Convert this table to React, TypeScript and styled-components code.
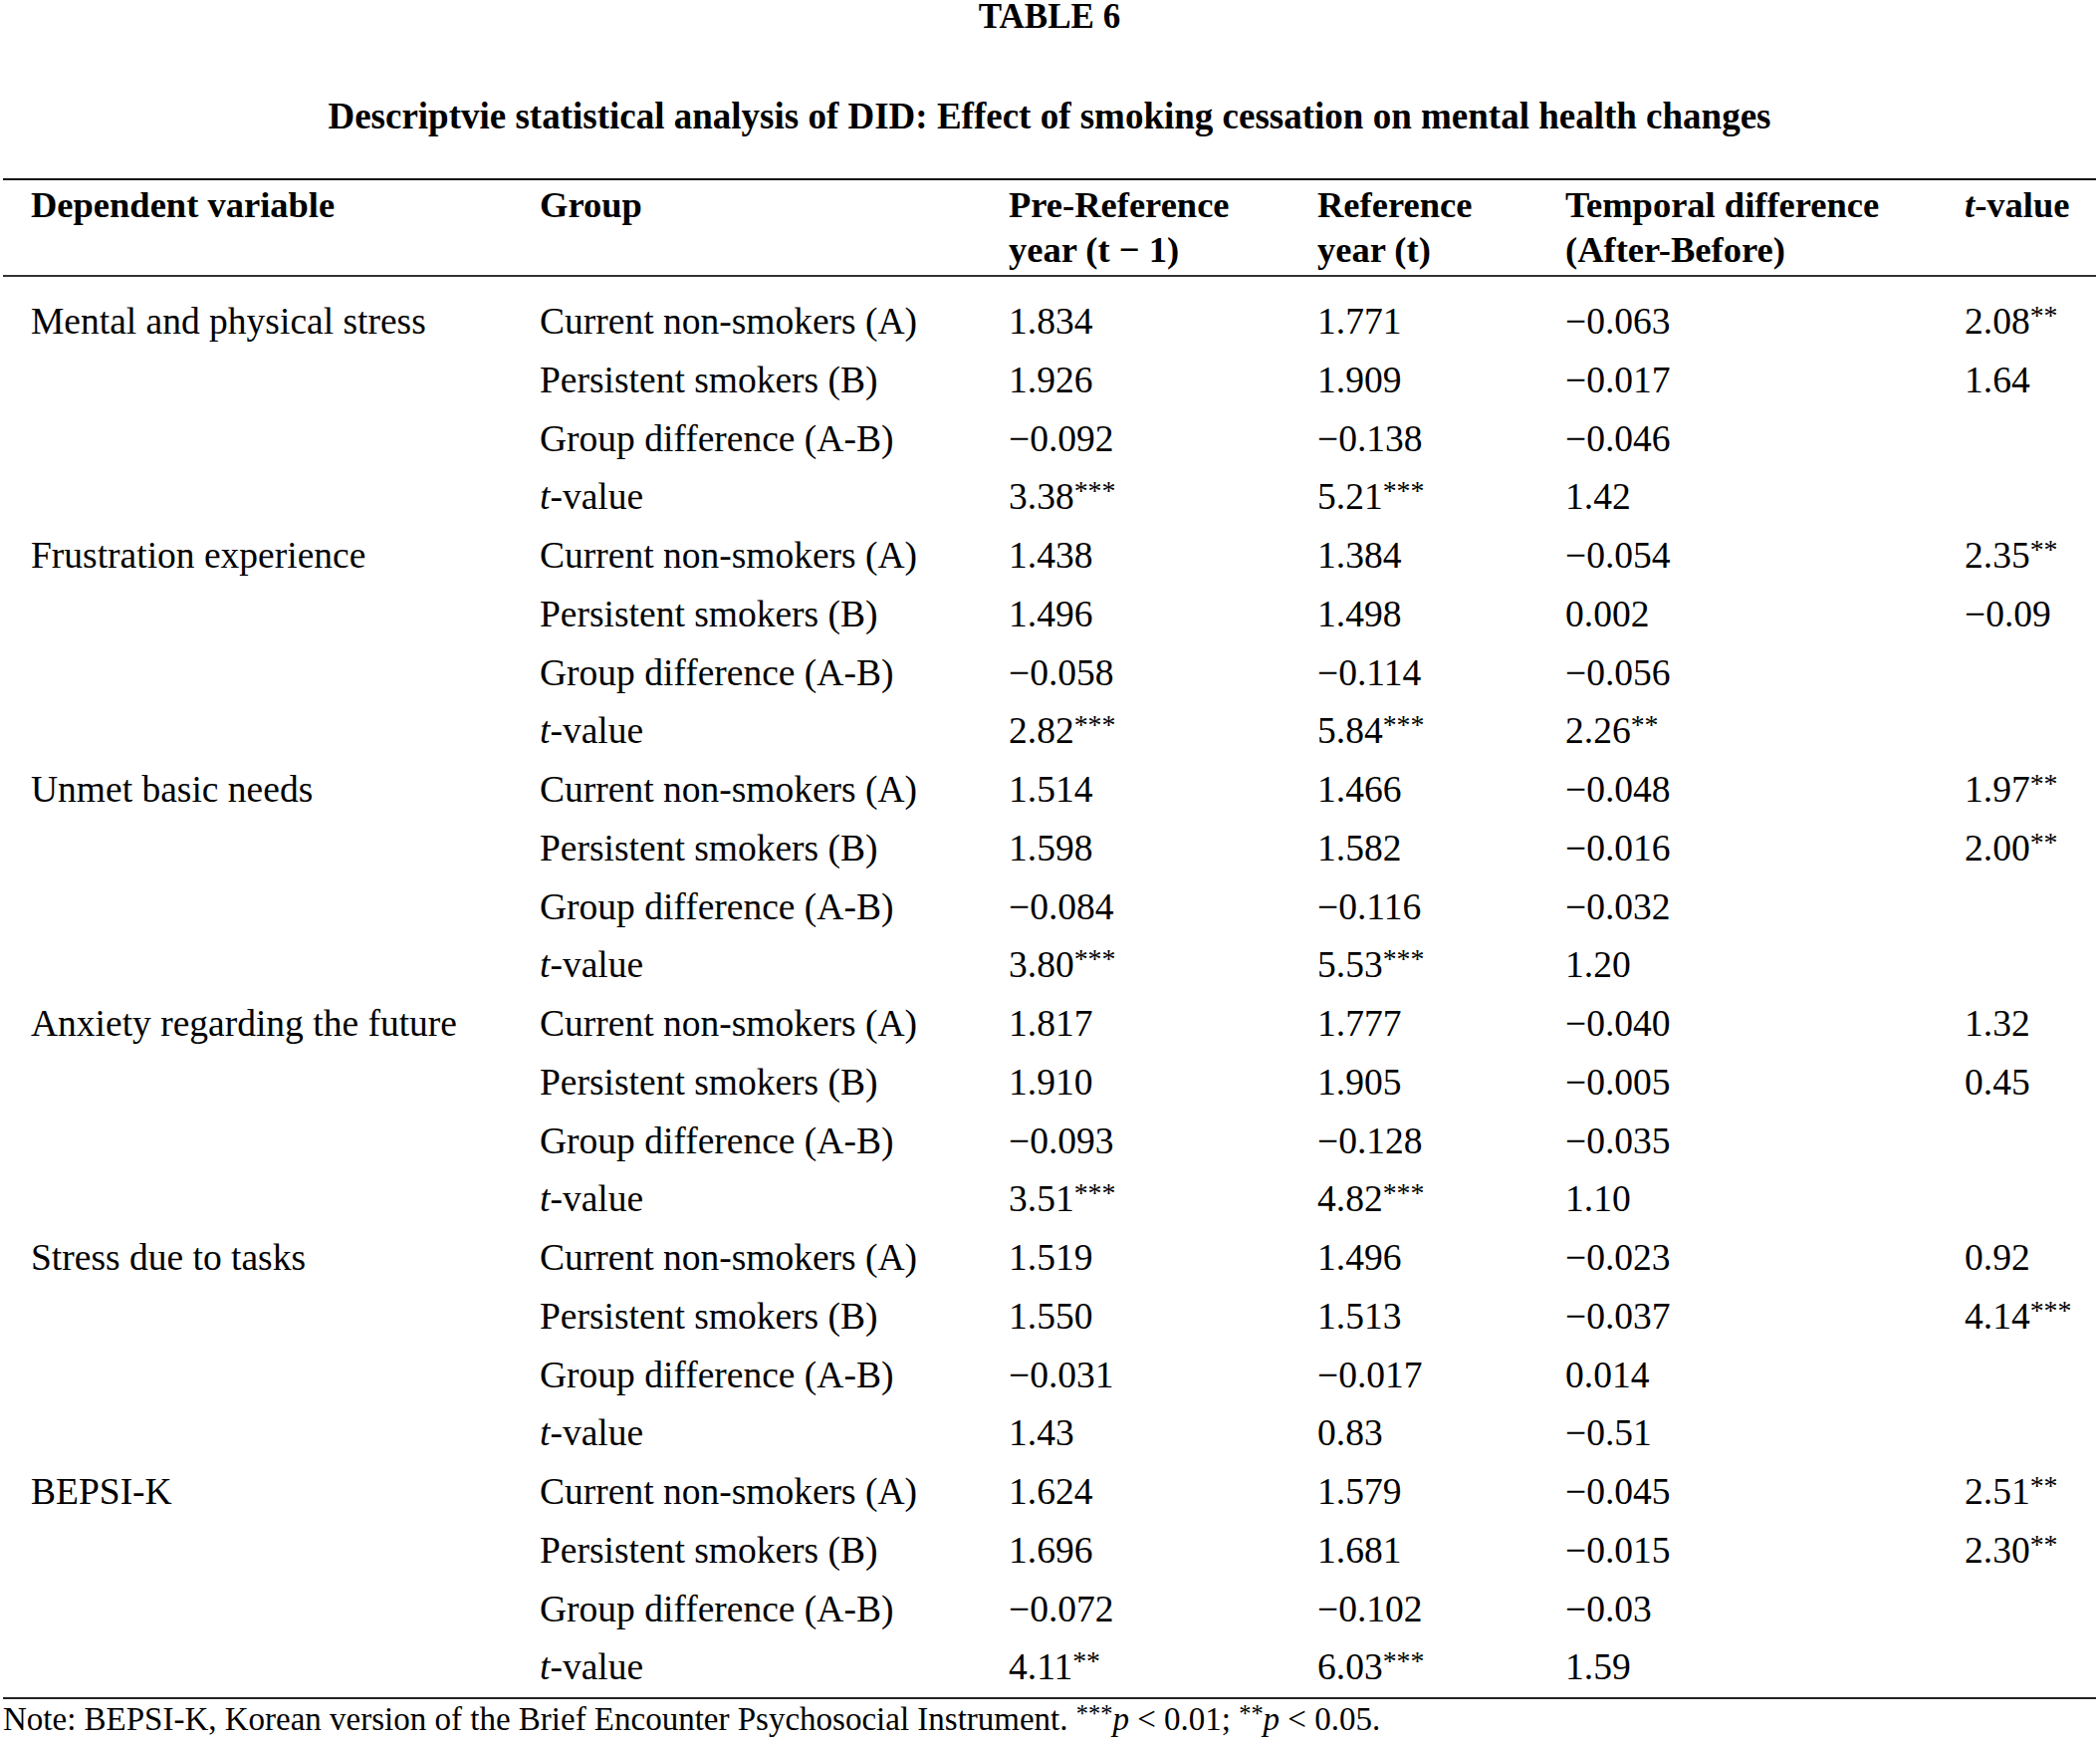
import React, { type FC } from "react";
import styled, { createGlobalStyle } from "styled-components";

const GlobalStyle = createGlobalStyle`
  html, body {
    margin: 0;
    padding: 0;
    background: #fff;
  }
  body {
    font-family: "Liberation Serif", "Times New Roman", serif;
    color: #000;
  }
`;

type Block = {
  name: string;
  a: string[];
  b: string[];
  diff: string[];
  t: string[];
};

const blocks: Block[] = [
  {
    name: "Mental and physical stress",
    a: ["1.834", "1.771", "−0.063", "2.08**"],
    b: ["1.926", "1.909", "−0.017", "1.64"],
    diff: ["−0.092", "−0.138", "−0.046"],
    t: ["3.38***", "5.21***", "1.42"],
  },
  {
    name: "Frustration experience",
    a: ["1.438", "1.384", "−0.054", "2.35**"],
    b: ["1.496", "1.498", "0.002", "−0.09"],
    diff: ["−0.058", "−0.114", "−0.056"],
    t: ["2.82***", "5.84***", "2.26**"],
  },
  {
    name: "Unmet basic needs",
    a: ["1.514", "1.466", "−0.048", "1.97**"],
    b: ["1.598", "1.582", "−0.016", "2.00**"],
    diff: ["−0.084", "−0.116", "−0.032"],
    t: ["3.80***", "5.53***", "1.20"],
  },
  {
    name: "Anxiety regarding the future",
    a: ["1.817", "1.777", "−0.040", "1.32"],
    b: ["1.910", "1.905", "−0.005", "0.45"],
    diff: ["−0.093", "−0.128", "−0.035"],
    t: ["3.51***", "4.82***", "1.10"],
  },
  {
    name: "Stress due to tasks",
    a: ["1.519", "1.496", "−0.023", "0.92"],
    b: ["1.550", "1.513", "−0.037", "4.14***"],
    diff: ["−0.031", "−0.017", "0.014"],
    t: ["1.43", "0.83", "−0.51"],
  },
  {
    name: "BEPSI-K",
    a: ["1.624", "1.579", "−0.045", "2.51**"],
    b: ["1.696", "1.681", "−0.015", "2.30**"],
    diff: ["−0.072", "−0.102", "−0.03"],
    t: ["4.11**", "6.03***", "1.59"],
  },
];

// column widths, table runs from x=3 to x=2105
const colWidths = [511, 471, 310, 249, 401, 160];

const Value: FC<{ text: string }> = ({ text }) => {
  const m = text.match(/^(.*?)(\*+)$/);
  if (!m) return <>{text}</>;
  return (
    <>
      {m[1]}
      <Stars>{m[2]}</Stars>
    </>
  );
};

const TValue: FC = () => (
  <>
    <em>t</em>-value
  </>
);

export default function App() {
  return (
    <>
      <GlobalStyle />
      <Page>
        <Caption>TABLE 6</Caption>
        <Subtitle>
          Descriptvie statistical analysis of DID: Effect of smoking cessation
          on mental health changes
        </Subtitle>
        <Table>
          <colgroup>
            {colWidths.map((w, i) => (
              <Col key={i} $width={w} />
            ))}
          </colgroup>
          <thead>
            <tr>
              <Th>Dependent variable</Th>
              <Th>Group</Th>
              <Th>
                Pre-Reference
                <br />
                year (t − 1)
              </Th>
              <Th>
                Reference
                <br />
                year (t)
              </Th>
              <Th>
                Temporal difference
                <br />
                (After-Before)
              </Th>
              <Th>
                <TValue />
              </Th>
            </tr>
          </thead>
          <tbody>
            {blocks.map((block, bi) => (
              <React.Fragment key={block.name}>
                <Row $first={bi === 0}>
                  <Td>{block.name}</Td>
                  <Td>Current non-smokers (A)</Td>
                  {block.a.map((v, i) => (
                    <Td key={i}>
                      <Value text={v} />
                    </Td>
                  ))}
                </Row>
                <Row>
                  <Td />
                  <Td>Persistent smokers (B)</Td>
                  {block.b.map((v, i) => (
                    <Td key={i}>
                      <Value text={v} />
                    </Td>
                  ))}
                </Row>
                <Row>
                  <Td />
                  <Td>Group difference (A-B)</Td>
                  {block.diff.map((v, i) => (
                    <Td key={i}>
                      <Value text={v} />
                    </Td>
                  ))}
                  <Td />
                </Row>
                <Row>
                  <Td />
                  <Td>
                    <TValue />
                  </Td>
                  {block.t.map((v, i) => (
                    <Td key={i}>
                      <Value text={v} />
                    </Td>
                  ))}
                  <Td />
                </Row>
              </React.Fragment>
            ))}
          </tbody>
        </Table>
        <Note>
          Note: BEPSI-K, Korean version of the Brief Encounter Psychosocial
          Instrument. <Stars>***</Stars>
          <em>p</em> &lt; 0.01; <Stars>**</Stars>
          <em>p</em> &lt; 0.05.
        </Note>
      </Page>
    </>
  );
}

const Page = styled.div`
  width: 2109px;
  padding: 0 4px 0 3px;
  box-sizing: border-box;
  font-size: 37.5px;
`;

const Caption = styled.h2`
  margin: 0;
  text-align: center;
  font-size: 35px;
  font-weight: 700;
  line-height: 34px;
`;

const Subtitle = styled.h3`
  margin: 62px 0 0;
  text-align: center;
  font-size: 37px;
  font-weight: 700;
  line-height: 41px;
`;

const Table = styled.table`
  margin-top: 42px;
  width: 2102px;
  table-layout: fixed;
  border-collapse: separate;
  border-spacing: 0;
  border-top: 2px solid #111;
  border-bottom: 2px solid #222;
`;

const Col = styled.col<{ $width: number }>`
  width: ${({ $width }) => $width}px;
`;

const Th = styled.th`
  text-align: left;
  vertical-align: top;
  font-weight: 700;
  font-size: 36.5px;
  line-height: 45px;
  padding: 2px 0 3px 28px;
  border-bottom: 2px solid #333;
  white-space: nowrap;
  em {
    font-style: italic;
  }
`;

const Row = styled.tr<{ $first?: boolean }>`
  td {
    padding-top: ${({ $first }) => ($first ? "16px" : "0")};
  }
`;

const Td = styled.td`
  padding: 0 0 0 28px;
  line-height: 58.75px;
  white-space: nowrap;
  vertical-align: top;
`;

const Stars = styled.sup`
  font-size: 0.74em;
  line-height: 0;
  vertical-align: 0.32em;
`;

const Note = styled.p`
  margin: 0;
  font-size: 33px;
  line-height: 40px;
  white-space: nowrap;
`;
